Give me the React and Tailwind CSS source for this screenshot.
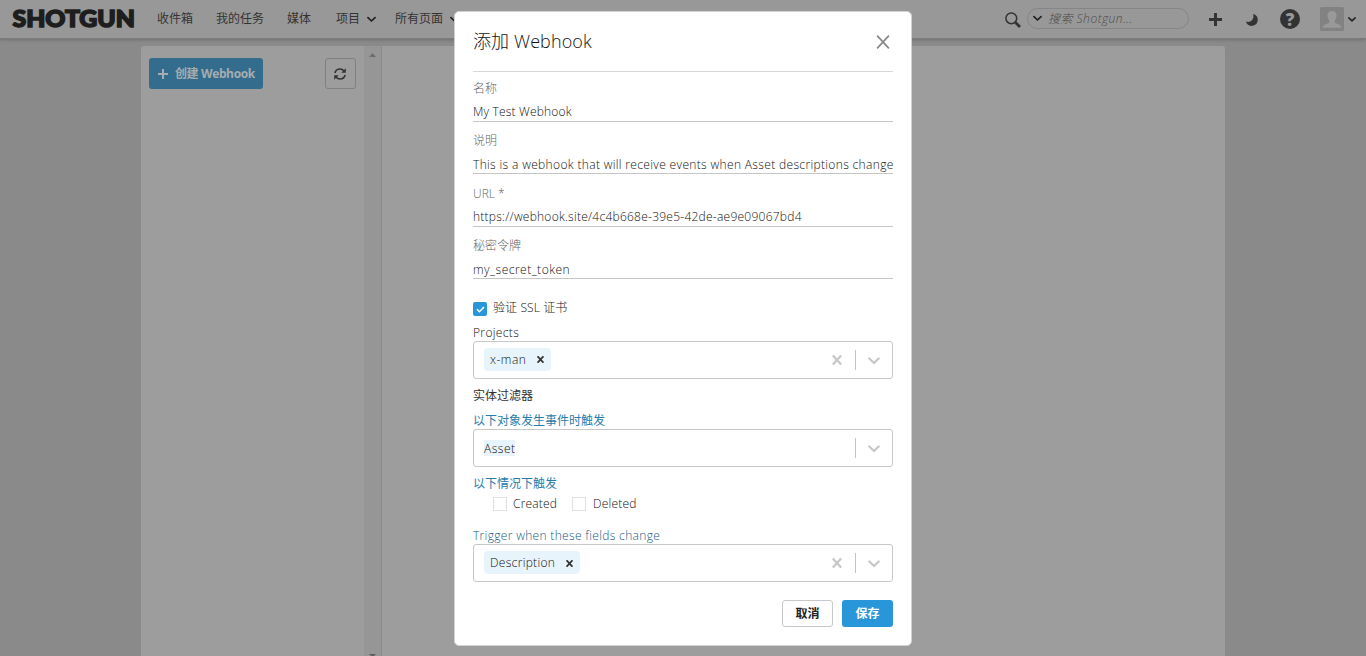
import React from "react";

function Chevron({ className }) {
  return (
    <svg className={className} viewBox="0 0 12 8" fill="none" stroke="currentColor" strokeWidth="2.3" strokeLinecap="round" strokeLinejoin="round">
      <path d="M1.300 1.500 6 6l4.700-4.500" />
    </svg>
  );
}

function Cross({ className, weight = 2.6 }) {
  return (
    <svg className={className} viewBox="0 0 10 10" fill="none" stroke="currentColor" strokeWidth={weight}>
      <path d="M.8.4l8.400 9.200M9.200.4.8 9.600" />
    </svg>
  );
}

function Header() {
  return (
    <header className="relative z-10 flex h-[39px] shrink-0 items-center border-b border-[#7c7c7c] bg-[#989898] text-[12px] text-[#333] shadow-[0_1px_3px_rgba(0,0,0,0.2)]">
      <svg className="ml-3 h-[38px] w-[124px] shrink-0" viewBox="0 0 124 38">
        <text x="0.5" y="26.800" textLength="122.500" lengthAdjust="spacingAndGlyphs" fontFamily="Lato, sans-serif" fontWeight="900" fontSize="22.5" fill="#1e1e1e" stroke="#1e1e1e" strokeWidth="1.5">SHOTGUN</text>
      </svg>
      <nav className="flex h-full items-center pl-[21px]">
        <span className="w-[59px]">收件箱</span>
        <span className="w-[71px]">我的任务</span>
        <span className="w-[49px]">媒体</span>
        <span className="flex w-[59px] items-center gap-[7px]">项目 <Chevron className="mt-px h-[7px] w-[9px] text-[#222]" /></span>
        <span className="flex items-center gap-[7px]">所有页面 <Chevron className="mt-px h-[7px] w-[9px] text-[#222]" /></span>
      </nav>
      <div className="ml-auto flex h-full items-center">
        <svg className="mr-[6px] mt-px h-4 w-4 text-[#333]" viewBox="0 0 16 16" fill="none" stroke="currentColor">
          <circle cx="6.3" cy="6.3" r="5.4" strokeWidth="1.5" />
          <path d="M10.500 10.500l4.500 4.500" strokeWidth="2.8" />
        </svg>
        <div className="mb-0.5 mr-5 flex h-[21px] w-[162px] items-center rounded-full border border-[#858585] pl-[5px]">
          <Chevron className="mr-1.5 mt-px h-[7px] w-[9px] text-[#222]" />
          <span className="mt-px font-['Open_Sans','Noto_Sans_CJK_SC',sans-serif] text-[12px] font-light italic tracking-[0.5px] text-[#4c4c4c]">搜索 Shotgun...</span>
        </div>
        <svg className="mr-[24px] h-[13px] w-[13px]" viewBox="0 0 13 13"><path d="M5 0h3v5h5v3H8v5H5V8H0V5h5z" fill="#333" /></svg>
        <svg className="mr-[22px] mt-0.5 h-3 w-3" viewBox="0 0 12 12"><path d="M7 0A6 6 0 1 1 0 7.600C4.500 9.500 8.800 5 7 0z" fill="#333" /></svg>
        <div className="mr-5 flex h-5 w-5 items-center justify-center rounded-full bg-[#333] text-[17px] font-extrabold leading-none text-[#989898]">?</div>
        <svg className="mr-1 h-6 w-6" viewBox="0 0 24 24">
          <rect width="24" height="24" rx="1.5" fill="#828282" />
          <path d="M12 4c3 0 4.800 2 4.500 5.200-.2 2-1 3.500-1.900 4.300v2.300c1.500.9 6.200 1.500 6.900 5H2.500c.7-3.500 5.400-4.100 6.900-5v-2.300c-.9-.8-1.700-2.300-1.900-4.300C7.200 6 9 4 12 4z" fill="#999" />
        </svg>
        <Chevron className="mr-[10px] h-[7px] w-[8px] text-[#222]" />
      </div>
    </header>
  );
}

function Workspace() {
  return (
    <main className="flex min-h-0 flex-1 bg-[#8a8a8a] pl-[141px] pr-[141px] pt-[7px]">
      <aside className="flex w-[241px] shrink-0 rounded-tl-[3px] border-r border-[#8a8a8a] bg-[#9d9d9d]">
        <div className="flex flex-1 items-start justify-between px-2 pt-3">
          <button className="flex h-[31px] w-[114px] items-center rounded-[3px] bg-[#336c8c] pl-[9px] text-[12px] font-bold text-[#a6adb1]">
            <svg className="mr-[7px] h-2.5 w-2.5" viewBox="0 0 10 10"><path d="M4 0h2v4h4v2H6v4H4V6H0V4h4z" fill="currentColor" /></svg>
            <span className="whitespace-nowrap tracking-[-0.38px]">创建 Webhook</span>
          </button>
          <button className="flex h-[31px] w-[31px] items-center justify-center rounded-[3px] border border-[#808080] pr-0.5 text-[#333]">
            <svg className="h-3 w-3" viewBox="0 0 12 12" fill="none" stroke="currentColor" strokeWidth="1.6">
              <path d="M.9 5C1.500 2.700 3.500 1 6 1c1.700 0 3 .7 4 1.900M11.100 7C10.500 9.300 8.500 11 6 11c-1.700 0-3-.7-4-1.900" />
              <path d="M11.800.2v4.500H7.300zM.2 11.800V7.300h4.500z" fill="currentColor" stroke="none" />
            </svg>
          </button>
        </div>
        <div className="flex w-[17px] flex-col items-center justify-between bg-[#969696] pt-[7px]">
          <svg className="h-1 w-[7px]" viewBox="0 0 7 4"><path d="M0 4 3.500 0 7 4z" fill="#6e6e6e" /></svg>
          <svg className="h-0.5 w-[7px]" viewBox="0 0 7 2"><path d="M0 0h7L5 2H2z" fill="#606060" /></svg>
        </div>
      </aside>
      <section className="flex-1 rounded-tr-[3px] bg-[#9d9d9d]" />
    </main>
  );
}

function Field({ label, value, height, spacing }) {
  return (
    <div className={"flex shrink-0 flex-col border-b border-[#c6c6c6] " + height}>
      <div className="h-5 text-[12px] leading-5 text-[#666]">{label}</div>
      <div className={"mt-[3px] h-5 whitespace-nowrap text-[12px] leading-5 text-[#111] " + spacing}>{value}</div>
    </div>
  );
}

function Select({ children, clearable }) {
  return (
    <div className="flex h-[38px] shrink-0 items-center rounded-[3px] border border-[#c8c8c8] pl-2.5">
      {children}
      <div className="ml-auto flex items-center text-[#c8c8c8]">
        {clearable && <Cross className="mr-[13px] h-2.5 w-2.5" weight={2.3} />}
        <span className="h-5 w-px bg-[#c4c4c4]" />
        <Chevron className="ml-3 mr-3 mt-px h-2 w-3" />
      </div>
    </div>
  );
}

function Chip({ children, width, spacing }) {
  return (
    <span className={"mb-px flex h-[23px] items-center justify-between rounded-sm bg-[#e8f4fb] pl-1.5 pr-[7px] text-[12px] " + width + " " + spacing}>
      {children}
      <Cross className="h-[7px] w-[7px] text-[#333]" weight={2.5} />
    </span>
  );
}

function Dialog() {
  return (
    <div className="absolute left-[454px] top-[11px] z-20 flex h-[635px] w-[458px] flex-col rounded-[5px] border border-[#d2d2d2] bg-white px-[18px] font-light text-[#111]">
      <div className="flex h-[60px] shrink-0 items-center justify-between border-b border-[#d8d8d8]">
        <h1 className="text-[18px] tracking-[0.1px]">添加 Webhook</h1>
        <Cross className="mr-[3px] h-3.5 w-3.5 text-[#888]" weight={1.2} />
      </div>
      <Field label="名称" value="My Test Webhook" height="h-[50px] pt-[7px]" spacing="tracking-[0.18px]" />
      <Field label="说明" value="This is a webhook that will receive events when Asset descriptions change" height="h-[52px] pt-[9px]" spacing="pt-px tracking-[0.345px]" />
      <Field label="URL *" value="https://webhook.site/4c4b668e-39e5-42de-ae9e09067bd4" height="h-[53px] pt-2.5" spacing="tracking-[0.25px]" />
      <Field label="秘密令牌" value="my_secret_token" height="h-[52px] pt-[9px]" spacing="pt-px tracking-[0.5px]" />
      <div className="mt-[18px] flex h-5 shrink-0 items-center text-[12px]">
        <span className="mr-1.5 mt-1 flex h-3.5 w-3.5 items-center justify-center rounded-[2px] bg-[#2896d8]">
          <svg className="h-[7px] w-[9px]" viewBox="0 0 10 8" fill="none" stroke="white" strokeWidth="1.7"><path d="M1 3.800 3.800 6.500 9 1.200" /></svg>
        </span>
        <span className="mt-0.5 tracking-[0.1px]">验证 SSL 证书</span>
      </div>
      <div className="mt-[7px] h-[17px] shrink-0 text-[12px] leading-[17px] tracking-[0.35px]">Projects</div>
      <Select clearable><Chip width="w-[67px]" spacing="tracking-[0.5px]">x-man</Chip></Select>
      <div className="mt-[7px] h-5 shrink-0 text-[12px] font-normal leading-5 text-[#333]">实体过滤器</div>
      <div className="mt-[6px] h-[17px] shrink-0 text-[12px] font-normal leading-[17px] text-[#2a7cab]">以下对象发生事件时触发</div>
      <Select><span className="h-4 w-[31px] bg-[#e8f4fb] text-[12px] leading-[18px] tracking-[0.5px]">Asset</span></Select>
      <div className="mt-[7px] h-5 shrink-0 text-[12px] font-normal leading-5 text-[#2a7cab]">以下情况下触发</div>
      <div className="flex h-5 shrink-0 items-center pl-5 text-[12px] tracking-[0.2px]">
        <span className="mr-1.5 h-3.5 w-3.5 border border-[#e0e0e0]" />
        <span className="w-[59px]">Created</span>
        <span className="mr-[7px] h-3.5 w-3.5 border border-[#e0e0e0]" />
        <span>Deleted</span>
      </div>
      <div className="mt-[13px] h-[17px] shrink-0 text-[12px] leading-[17px] tracking-[0.33px] text-[#165a85]">Trigger when these fields change</div>
      <Select clearable><Chip width="w-24" spacing="pt-px tracking-[0.32px]">Description</Chip></Select>
      <div className="mt-[18px] flex shrink-0 justify-end gap-[9px] text-[12px] font-bold">
        <button className="h-[27px] w-[51px] rounded-[3px] border border-[#c8c8c8] text-[#222]">取消</button>
        <button className="h-[27px] w-[51px] rounded-[3px] bg-[#2896d8] text-white">保存</button>
      </div>
    </div>
  );
}

export default function App() {
  return (
    <div className="relative flex h-[656px] w-full flex-col overflow-hidden font-['Open_Sans','Noto_Sans_CJK_SC',sans-serif]">
      <Header />
      <Workspace />
      <Dialog />
    </div>
  );
}
